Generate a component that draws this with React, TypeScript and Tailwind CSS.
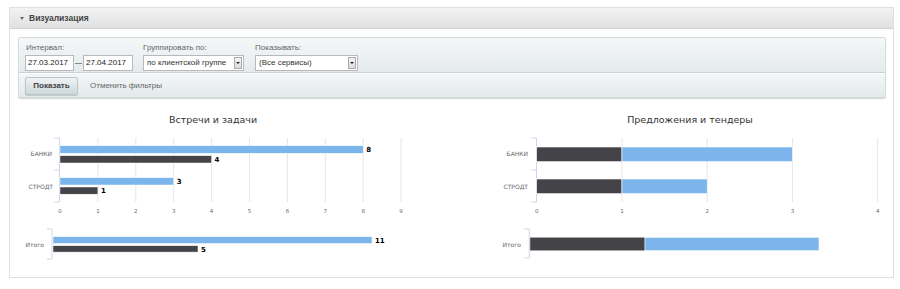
import React from "react";

const chartFont = { fontFamily: "'DejaVu Sans', sans-serif" };

const BLUE = "#7cb5ec";
const DARK = "#434348";
const GRID = "#e6e6e6";
const AXIS = "#ccd6eb";
const LABEL = "#666666";

const Bracket = ({ x, y1, y2, mid }: { x: number; y1: number; y2: number; mid?: number }) => (
  <g stroke={AXIS} strokeWidth={1} fill="none">
    <line x1={x} y1={y1} x2={x} y2={y2} />
    <line x1={x - 5} y1={y1} x2={x} y2={y1} />
    {mid !== undefined && <line x1={x - 5} y1={mid} x2={x} y2={mid} />}
    <line x1={x - 5} y1={y2} x2={x} y2={y2} />
  </g>
);

const MeetingsChart = () => {
  const x0 = 50;
  const step = 37.9;
  const ticks = [0, 1, 2, 3, 4, 5, 6, 7, 8, 9];
  const total = 29;
  return (
    <svg width={440} height={178} style={chartFont}>
      <text x={203} y={25} textAnchor="middle" fontSize={9.5} fill="#333333">
        Встречи и задачи
      </text>

      {/* grid */}
      {ticks.slice(1).map((t) => (
        <line key={t} x1={x0 + t * step} y1={40} x2={x0 + t * step} y2={104} stroke={GRID} strokeWidth={1} />
      ))}
      <Bracket x={49.5} y1={40} y2={104} mid={72} />

      {/* categories */}
      <text x={42} y={57.5} textAnchor="end" fontSize={6} fill={LABEL}>БАНКИ</text>
      <text x={43} y={90.5} textAnchor="end" fontSize={6} fill={LABEL}>СТРОДТ</text>

      {/* bars */}
      <rect x={x0} y={47.7} width={8 * step} height={7.6} fill={BLUE} stroke="#fff" strokeWidth={0.5} />
      <rect x={x0} y={57.7} width={4 * step} height={7.3} fill={DARK} stroke="#fff" strokeWidth={0.5} />
      <rect x={x0} y={79.7} width={3 * step} height={7.3} fill={BLUE} stroke="#fff" strokeWidth={0.5} />
      <rect x={x0} y={89} width={1 * step} height={7.2} fill={DARK} stroke="#fff" strokeWidth={0.5} />

      <g fontSize={7} fontWeight="bold" fill="#000">
        <text x={x0 + 8 * step + 3} y={54}>8</text>
        <text x={x0 + 4 * step + 3} y={64}>4</text>
        <text x={x0 + 3 * step + 3} y={86}>3</text>
        <text x={x0 + 1 * step + 3} y={95}>1</text>
      </g>

      {/* x axis labels */}
      {ticks.map((t) => (
        <text key={t} x={x0 + t * step} y={115} textAnchor="middle" fontSize={5.5} fill={LABEL}>
          {t}
        </text>
      ))}

      {/* total */}
      <Bracket x={42} y1={131} y2={161} />
      <text x={34} y={148.5} textAnchor="end" fontSize={6} fill={LABEL}>Итого</text>
      <rect x={43} y={138.7} width={11 * total} height={6.8} fill={BLUE} stroke="#fff" strokeWidth={0.5} />
      <rect x={43} y={147.7} width={5 * total} height={6.4} fill={DARK} stroke="#fff" strokeWidth={0.5} />
      <g fontSize={7} fontWeight="bold" fill="#000">
        <text x={43 + 11 * total + 3} y={144.5}>11</text>
        <text x={43 + 5 * total + 3} y={153.5}>5</text>
      </g>
    </svg>
  );
};

const OffersChart = () => {
  const x0 = 86.7;
  const step = 85.25;
  const ticks = [0, 1, 2, 3, 4];
  return (
    <svg width={443} height={178} style={chartFont}>
      <text x={240} y={25} textAnchor="middle" fontSize={9.5} fill="#333333">
        Предложения и тендеры
      </text>

      {ticks.slice(1).map((t) => (
        <line key={t} x1={x0 + t * step} y1={40} x2={x0 + t * step} y2={104} stroke={GRID} strokeWidth={1} />
      ))}
      <Bracket x={86.5} y1={40} y2={104} mid={72} />

      <text x={78} y={57.5} textAnchor="end" fontSize={6} fill={LABEL}>БАНКИ</text>
      <text x={78} y={90.5} textAnchor="end" fontSize={6} fill={LABEL}>СТРОДТ</text>

      <rect x={x0} y={49} width={step} height={14.7} fill={DARK} stroke="#fff" strokeWidth={0.6} />
      <rect x={x0 + step} y={49} width={2 * step} height={14.7} fill={BLUE} stroke="#fff" strokeWidth={0.6} />
      <rect x={x0} y={81} width={step} height={14.7} fill={DARK} stroke="#fff" strokeWidth={0.6} />
      <rect x={x0 + step} y={81} width={step} height={14.7} fill={BLUE} stroke="#fff" strokeWidth={0.6} />

      {ticks.map((t) => (
        <text key={t} x={x0 + t * step} y={115} textAnchor="middle" fontSize={5.5} fill={LABEL}>
          {t}
        </text>
      ))}

      {/* total */}
      <Bracket x={79.3} y1={131} y2={160} />
      <text x={71} y={148.5} textAnchor="end" fontSize={6} fill={LABEL}>Итого</text>
      <rect x={80} y={139.3} width={115} height={13.4} fill={DARK} stroke="#c8c8c8" strokeWidth={0.6} />
      <rect x={195} y={139.3} width={174} height={13.4} fill={BLUE} stroke="#fff" strokeWidth={0.6} />
    </svg>
  );
};

const SelectBox = ({ value, width }: { value: string; width: string }) => (
  <div className={`flex h-[16px] items-center border border-[#b9b9b9] bg-white ${width}`}>
    <span className="flex-1 truncate pl-[3px] text-[8px] text-[#333]">{value}</span>
    <span className="mr-[1px] flex h-[12px] w-[8px] items-center justify-center border border-[#a9a9a9] bg-gradient-to-b from-[#f4f4f4] to-[#dcdcdc]">
      <span className="h-0 w-0 border-x-[2px] border-t-[2.5px] border-x-transparent border-t-[#222]" />
    </span>
  </div>
);

export default function App() {
  return (
    <div className="h-[289px] w-[900px] bg-white pl-[9px] pt-[7px]" style={{ fontFamily: "'Liberation Sans', Arial, sans-serif" }}>
      <div className="w-[885px] border border-[#e0e0e0]">
        {/* Header */}
        <div className="flex h-[21px] items-center gap-[5px] border-b border-[#d2d2d2] bg-gradient-to-b from-[#f2f2f2] to-[#e1e1e1] pl-[10px]">
          <span className="h-0 w-0 border-x-[2.5px] border-t-[3px] border-x-transparent border-t-[#666]" />
          <span className="text-[8.5px] font-bold text-[#444]">Визуализация</span>
        </div>

        {/* Body */}
        <div className="pl-[8px] pr-[7px] pt-[8px]">
          {/* Filters */}
          <div className="rounded-[2px] border border-[#d6dde0] shadow-[0_1px_1px_rgba(0,0,0,0.18)]">
            <div className="flex h-[35px] border-b border-[#c9d1d4] bg-gradient-to-b from-[#f5f7f8] to-[#e5ebed] pl-[6px] pt-[2px]">
              <div className="w-[118px]">
                <div className="h-[15px] pl-[1px] text-[8px] leading-[15px] text-[#666]">Интервал:</div>
                <div className="flex items-center">
                  <div className="flex h-[16px] w-[49px] items-center border border-[#b9b9b9] bg-white pl-[2px] text-[8px] text-[#222]">27.03.2017</div>
                  <div className="mx-[1px] h-px w-[7px] bg-[#888]" />
                  <div className="flex h-[16px] w-[50px] items-center border border-[#b9b9b9] bg-white pl-[2px] text-[8px] text-[#222]">27.04.2017</div>
                </div>
              </div>
              <div className="w-[112px]">
                <div className="h-[15px] text-[8px] leading-[15px] text-[#666]">Группировать по:</div>
                <SelectBox value="по клиентской группе" width="w-[101px]" />
              </div>
              <div>
                <div className="h-[15px] text-[8px] leading-[15px] text-[#666]">Показывать:</div>
                <SelectBox value="(Все сервисы)" width="w-[103px]" />
              </div>
            </div>
            <div className="flex h-[24px] items-center gap-[12px] border-t border-white bg-gradient-to-b from-[#f3f6f7] to-[#e3e9eb] pl-[6px]">
              <button className="h-[18px] w-[53px] rounded-[2px] border border-[#bcc6ca] bg-gradient-to-b from-[#eef2f3] to-[#cfd8dc] text-[8px] font-bold text-[#444] shadow-[0_1px_1px_rgba(0,0,0,0.15)]">
                Показать
              </button>
              <span className="text-[8px] text-[#666]">Отменить фильтры</span>
            </div>
          </div>
        </div>

        {/* Charts */}
        <div className="flex h-[179px] items-start">
          <MeetingsChart />
          <OffersChart />
        </div>
      </div>
    </div>
  );
}
